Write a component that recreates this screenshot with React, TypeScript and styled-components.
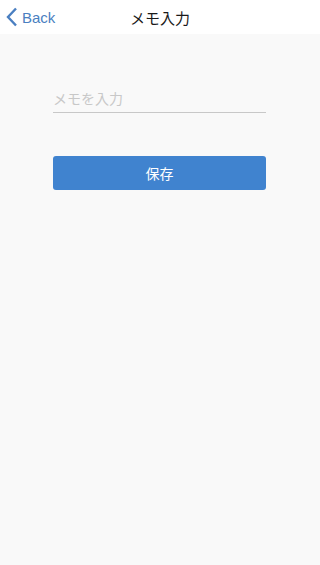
import React from 'react';
import styled, { createGlobalStyle } from 'styled-components';

const GlobalStyle = createGlobalStyle`
  html, body {
    margin: 0;
    padding: 0;
    background: #f9f9f9;
    font-family: "Liberation Sans", "Noto Sans CJK JP", sans-serif;
  }
`;

const MemoInput: React.FC = () => {
  return (
    <Page>
      <GlobalStyle />
      <Header>
        <BackButton>
          <svg width="12" height="20" viewBox="0 0 12 20">
            <path d="M10 1.5 L2 10 L10 18.5" fill="none" stroke="#4a7fc1" strokeWidth="2.4" />
          </svg>
          Back
        </BackButton>
        <Title>メモ入力</Title>
      </Header>
      <Content>
        <MemoField placeholder="メモを入力" autoFocus />
        <SaveButton>保存</SaveButton>
      </Content>
    </Page>
  );
};

const Page = styled.div`
  min-height: 565px;
  background: #f9f9f9;
`;

const Header = styled.div`
  position: relative;
  display: flex;
  align-items: center;
  justify-content: center;
  height: 34px;
  background: #ffffff;
`;

const BackButton = styled.button`
  position: absolute;
  left: 6px;
  top: 0;
  height: 34px;
  display: flex;
  align-items: center;
  gap: 4px;
  padding: 0;
  border: none;
  background: transparent;
  color: #4a7fc1;
  font-family: "Liberation Sans", sans-serif;
  font-size: 15px;
  cursor: pointer;
`;

const Title = styled.div`
  font-size: 15px;
  color: #1a1a1a;
  font-family: "Noto Sans CJK JP", sans-serif;
`;

const Content = styled.div`
  display: flex;
  flex-direction: column;
  padding: 49px 0 0 53px;
  gap: 43px;
`;

const MemoField = styled.input`
  width: 213px;
  height: 30px;
  box-sizing: border-box;
  padding: 0;
  border: none;
  border-bottom: 1px solid #c8c8c8;
  background: transparent;
  outline: none;
  font-size: 14px;
  font-family: "Noto Sans CJK JP", sans-serif;
  color: #222;
  caret-color: #000;

  &::placeholder {
    color: #c8c8c8;
  }
`;

const SaveButton = styled.button`
  width: 213px;
  height: 34px;
  border: none;
  border-radius: 3px;
  background: #4083cf;
  color: #ffffff;
  font-size: 14px;
  font-family: "Noto Sans CJK JP", sans-serif;
  cursor: pointer;
`;

export default MemoInput;
